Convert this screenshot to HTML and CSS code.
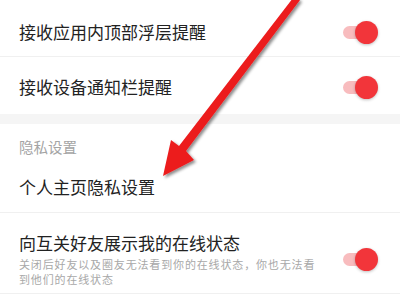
FILE: index.html
```html
<!DOCTYPE html>
<html lang="zh">
<head>
<meta charset="utf-8">
<link rel="stylesheet" href="styles.css">
</head>
<body>
<div class="page">
  <div class="row r1">
    <span class="title">接收应用内顶部浮层提醒</span>
    <span class="toggle"><span class="knob"></span></span>
  </div>
  <div class="row r2">
    <span class="title">接收设备通知栏提醒</span>
    <span class="toggle"><span class="knob"></span></span>
  </div>
  <div class="band"></div>
  <div class="section">隐私设置</div>
  <div class="row r3">
    <span class="title">个人主页隐私设置</span>
  </div>
  <div class="row r4">
    <div class="texts">
      <div class="title">向互关好友展示我的在线状态</div>
      <div class="sub">关闭后好友以及圈友无法看到你的在线状态，你也无法看<br>到他们的在线状态</div>
    </div>
    <span class="toggle"><span class="knob"></span></span>
  </div>
  <svg class="arrow" width="400" height="297" viewBox="0 0 400 297">
    <defs>
      <filter id="sh" x="-20%" y="-20%" width="140%" height="140%">
        <feDropShadow dx="2" dy="2" stdDeviation="1.6" flood-color="#000" flood-opacity="0.45"/>
      </filter>
    </defs>
    <path filter="url(#sh)" fill="#ec1b1f" d="M297 -2 L300 0 L186 151 L194 160 L163 176 L171 140 L179 146 L293 -2 Z"/>
  </svg>
</div>
</body>
</html>
```
FILE: styles.css
```css
html, body {
  margin: 0;
  padding: 0;
  background: #fff;
}
body {
  font-family: "Noto Sans CJK SC", "Noto Sans", sans-serif;
  width: 400px;
  height: 297px;
  overflow: hidden;
}
.page {
  position: relative;
  width: 400px;
  height: 297px;
  overflow: hidden;
}
.row {
  display: flex;
  align-items: center;
  justify-content: space-between;
  padding: 0 26px 0 19px;
  box-sizing: border-box;
}
.r1 {
  height: 49px;
  margin-top: 8px;
  border-bottom: 1px solid #f0f0f0;
}
.r2 {
  height: 57px;
  padding-top: 3px;
}
.r3 {
  height: 52px;
  border-bottom: 1px solid #f0f0f0;
}
.r4 {
  height: 81px;
  align-items: flex-start;
  padding-top: 18px;
  border-bottom: 1px solid #f0f0f0;
}
.r4 .toggle {
  margin-top: 22px;
}
.title {
  font-size: 17px;
  color: #222;
  line-height: 24px;
}
.band {
  height: 10px;
  background: #f5f5f5;
}
.section {
  padding: 11px 19px 0;
  height: 37px;
  box-sizing: border-box;
  font-size: 14.5px;
  line-height: 24px;
  color: #a4a4a4;
}
.texts {
  display: flex;
  flex-direction: column;
}
.sub {
  font-size: 11px;
  letter-spacing: 0.85px;
  line-height: 15px;
  color: #a8a8a8;
  margin-top: 2px;
  white-space: nowrap;
}
.toggle {
  position: relative;
  width: 31px;
  height: 13px;
  border-radius: 7px;
  background: #f8bcbe;
  flex: none;
}
.knob {
  position: absolute;
  right: -4px;
  top: -5px;
  width: 23px;
  height: 23px;
  border-radius: 50%;
  background: #f2353a;
  box-shadow: 0 1px 3px rgba(0,0,0,0.25);
}
.arrow {
  position: absolute;
  left: 0;
  top: 0;
  pointer-events: none;
}
```
